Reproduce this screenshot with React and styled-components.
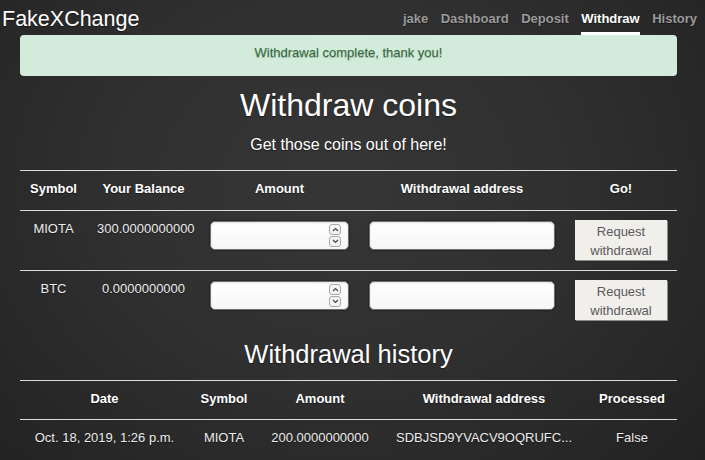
import React from 'react';
import styled, { createGlobalStyle } from 'styled-components';

const GlobalStyle = createGlobalStyle`
  html, body {
    margin: 0;
    padding: 0;
  }
  body {
    height: 460px;
    overflow: hidden;
    font-family: "Liberation Sans", Arial, sans-serif;
    color: #eeeeee;
    background: radial-gradient(ellipse 70% 90% at 48% 40%, #363636 0%, #303030 45%, #272727 80%, #222222 100%);
    text-shadow: 0 1px 1px rgba(0, 0, 0, 0.45);
  }
`;

const Navbar = styled.header`
  display: flex;
  justify-content: space-between;
  align-items: flex-start;
  height: 35px;
`;

const Brand = styled.a`
  margin: 7px 0 0 2px;
  font-size: 21.5px;
  line-height: 24px;
  color: #ffffff;
  text-decoration: none;
`;

const NavList = styled.nav`
  display: flex;
  gap: 12.5px;
  margin-right: 8px;
`;

const NavLink = styled.a`
  padding: 10.5px 0 5.5px;
  font-size: 13px;
  font-weight: 700;
  line-height: 16px;
  color: ${p => (p.$active ? '#ffffff' : '#9a9a9a')};
  border-bottom: 3px solid ${p => (p.$active ? '#ffffff' : 'transparent')};
  text-decoration: none;
`;

const Container = styled.main`
  width: 657px;
  margin-left: 20px;
`;

const Alert = styled.div`
  height: 41px;
  box-sizing: border-box;
  padding: 9px 15px 14px;
  border-radius: 4px;
  background: #d3ebda;
  color: #336b3c;
  font-size: 13px;
  line-height: 18px;
  text-align: center;
  text-shadow: 0 1px 1px rgba(0, 0, 0, 0.25);
`;

const Title = styled.h1`
  margin: 11px 0 0;
  font-size: 32px;
  font-weight: 400;
  line-height: 36px;
  text-align: center;
  color: #ffffff;
`;

const Lead = styled.p`
  margin: 11.5px 0 15.5px;
  font-size: 16px;
  line-height: 20px;
  text-align: center;
  color: #ffffff;
`;

const SubTitle = styled.h2`
  margin: 9px 0 11px;
  font-size: 25.5px;
  font-weight: 400;
  line-height: 30px;
  text-align: center;
  color: #ffffff;
`;

const Table = styled.table`
  width: 657px;
  table-layout: fixed;
  border-collapse: collapse;
  font-size: 13px;
  line-height: 20px;
`;

const Th = styled.th`
  padding: 8px 10px ${p => (p.$tight ? '10px' : '11px')};
  font-weight: 700;
  color: #ffffff;
  text-align: center;
  border-top: 1px solid #dcdcdc;
  border-bottom: 1px solid #dcdcdc;
`;

const Td = styled.td`
  padding: 8px 10px 10px;
  vertical-align: top;
  text-align: center;
  color: #ececec;
  white-space: nowrap;
  border-bottom: ${p => (p.$last ? 'none' : '1px solid #dcdcdc')};
`;

const Field = styled.div`
  display: flex;
  align-items: center;
  height: 29px;
  margin-top: 2px;
  box-sizing: border-box;
  padding: 0 7px 0 6px;
  border: 1px solid #6f6f6f;
  border-radius: 5px;
  background: linear-gradient(#ffffff, #f6f6f6);
  box-shadow: 0 0 2px rgba(0, 0, 0, 0.7), inset 0 1px 2px rgba(0, 0, 0, 0.12);
`;

const FieldInput = styled.input`
  flex: 1;
  min-width: 0;
  border: none;
  outline: none;
  background: transparent;
  font: 13px "Liberation Sans", Arial, sans-serif;
`;

const Spinner = styled.div`
  display: flex;
  flex-direction: column;
  gap: 1px;
`;

const SpinButton = styled.span`
  display: flex;
  align-items: center;
  justify-content: center;
  width: 12px;
  height: 11px;
  box-sizing: border-box;
  border: 1px solid #a8a8a8;
  border-radius: 3px;
  background: #f4f4f4;
`;

const RequestButton = styled.button`
  display: block;
  width: 92px;
  height: 40px;
  margin: 1px auto 0;
  padding: 1px 0 0;
  border: none;
  background: #f0efec;
  box-shadow: 1px 1px 0 #8c8c8c;
  color: #5a5a5a;
  font: 13px/19px "Liberation Sans", Arial, sans-serif;
  text-shadow: none;
  cursor: pointer;
`;

const Chevron = ({ up }) => (
  <svg width="7" height="5" viewBox="0 0 7 5">
    <polyline
      points={up ? '1,4 3.5,1.5 6,4' : '1,1 3.5,3.5 6,1'}
      fill="none"
      stroke="#444"
      strokeWidth="1.2"
    />
  </svg>
);

const AmountInput = () => (
  <Field>
    <FieldInput type="text" />
    <Spinner>
      <SpinButton><Chevron up /></SpinButton>
      <SpinButton><Chevron /></SpinButton>
    </Spinner>
  </Field>
);

const AddressInput = () => (
  <Field>
    <FieldInput type="text" />
  </Field>
);

const balances = [
  { symbol: 'MIOTA', balance: '300.0000000000' },
  { symbol: 'BTC', balance: '0.0000000000' },
];

const history = [
  {
    date: 'Oct. 18, 2019, 1:26 p.m.',
    symbol: 'MIOTA',
    amount: '200.0000000000',
    address: 'SDBJSD9YVACV9OQRUFC...',
    processed: 'False',
  },
];

export default function App() {
  return (
    <>
      <GlobalStyle />
      <Navbar>
        <Brand href="#">FakeXChange</Brand>
        <NavList>
          <NavLink href="#">jake</NavLink>
          <NavLink href="#">Dashboard</NavLink>
          <NavLink href="#">Deposit</NavLink>
          <NavLink href="#" $active>Withdraw</NavLink>
          <NavLink href="#">History</NavLink>
        </NavList>
      </Navbar>

      <Container>
        <Alert>Withdrawal complete, thank you!</Alert>
        <Title>Withdraw coins</Title>
        <Lead>Get those coins out of here!</Lead>

        <Table>
          <colgroup>
            <col style={{ width: 67 }} />
            <col style={{ width: 113 }} />
            <col style={{ width: 159 }} />
            <col style={{ width: 206 }} />
            <col style={{ width: 112 }} />
          </colgroup>
          <thead>
            <tr>
              <Th>Symbol</Th>
              <Th>Your Balance</Th>
              <Th>Amount</Th>
              <Th>Withdrawal address</Th>
              <Th>Go!</Th>
            </tr>
          </thead>
          <tbody>
            {balances.map((b, i) => {
              const last = i === balances.length - 1;
              return (
                <tr key={b.symbol}>
                  <Td $last={last}>{b.symbol}</Td>
                  <Td $last={last}>{b.balance}</Td>
                  <Td $last={last}><AmountInput /></Td>
                  <Td $last={last}><AddressInput /></Td>
                  <Td $last={last}>
                    <RequestButton>Request<br />withdrawal</RequestButton>
                  </Td>
                </tr>
              );
            })}
          </tbody>
        </Table>

        <SubTitle>Withdrawal history</SubTitle>

        <Table>
          <colgroup>
            <col style={{ width: 169 }} />
            <col style={{ width: 70 }} />
            <col style={{ width: 122 }} />
            <col style={{ width: 206 }} />
            <col style={{ width: 90 }} />
          </colgroup>
          <thead>
            <tr>
              <Th $tight>Date</Th>
              <Th $tight>Symbol</Th>
              <Th $tight>Amount</Th>
              <Th $tight>Withdrawal address</Th>
              <Th $tight>Processed</Th>
            </tr>
          </thead>
          <tbody>
            {history.map((h, i) => (
              <tr key={i}>
                <Td $last>{h.date}</Td>
                <Td $last>{h.symbol}</Td>
                <Td $last>{h.amount}</Td>
                <Td $last>{h.address}</Td>
                <Td $last>{h.processed}</Td>
              </tr>
            ))}
          </tbody>
        </Table>
      </Container>
    </>
  );
}
